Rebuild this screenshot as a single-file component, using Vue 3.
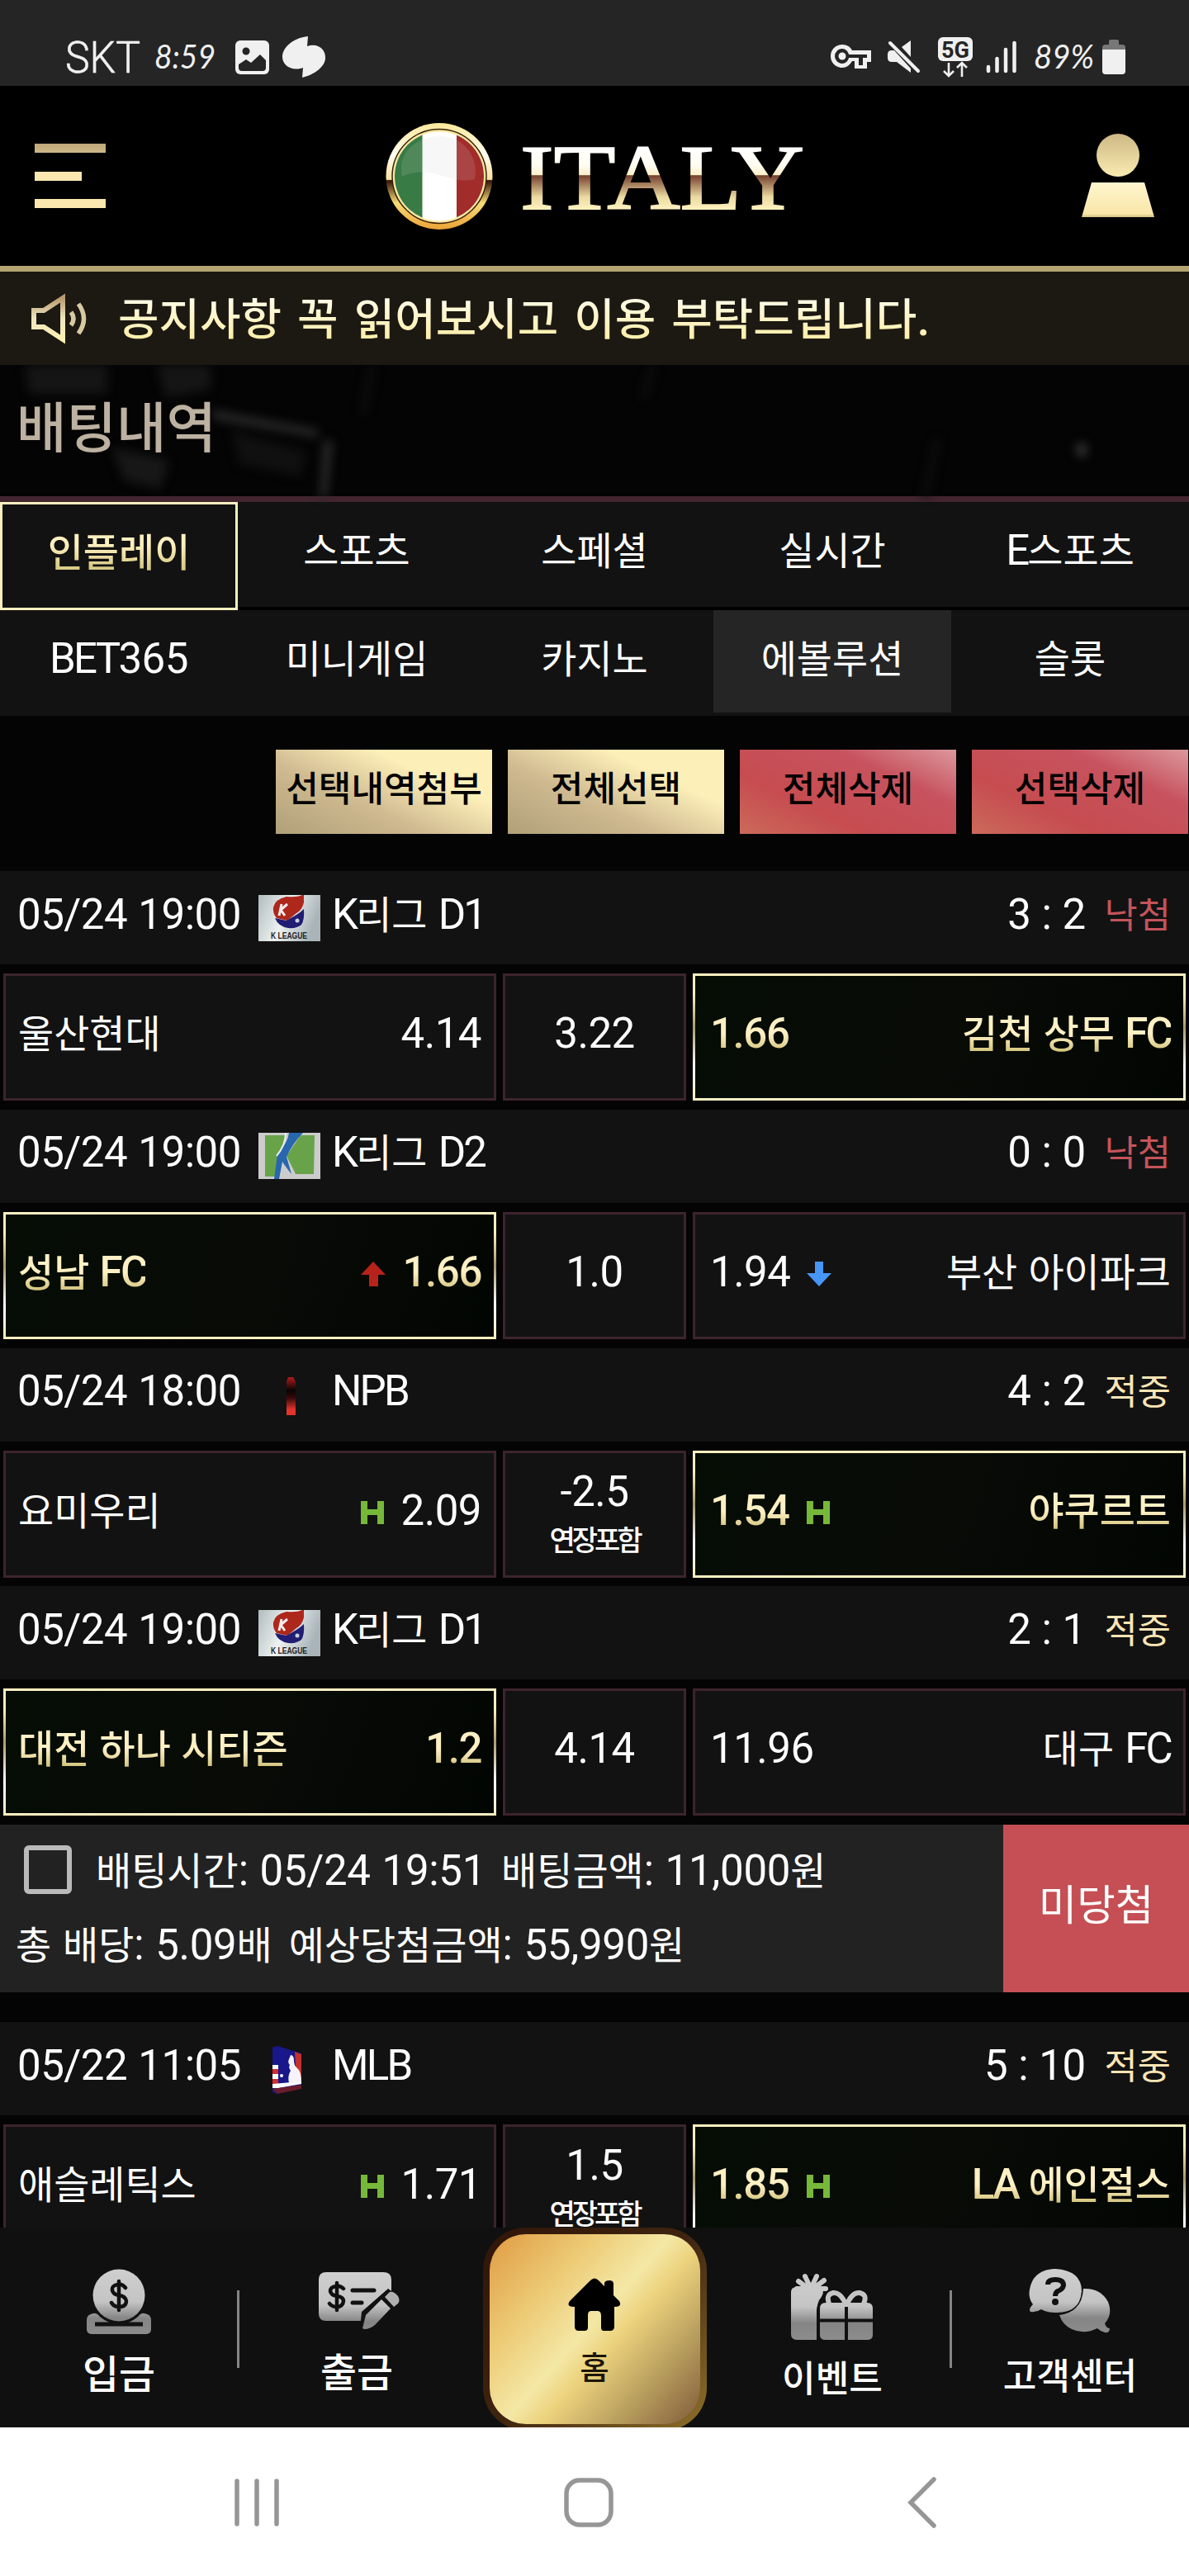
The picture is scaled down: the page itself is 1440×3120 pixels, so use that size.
<template>
  <div class="phone">
    <!-- Status bar -->
    <div class="status-bar">
      <div class="status-left">
        <svg class="carrier" width="94" height="68" viewBox="0 0 94 68">
          <text x="0" y="53" textLength="91" lengthAdjust="spacingAndGlyphs">SKT</text>
        </svg>
        <svg class="clock" width="78" height="60" viewBox="0 0 78 60">
          <text x="0" y="44" textLength="74" lengthAdjust="spacingAndGlyphs">8:59</text>
        </svg>
        <svg class="photo" width="41" height="41" viewBox="0 0 41 41">
          <rect width="41" height="41" rx="6" fill="#f0f0f0" />
          <circle cx="13" cy="13" r="4.5" fill="#252525" />
          <path d="M4 29l9-6 6 4 11-10 7 7v9q0 4-4 4H8q-4 0-4-4z" fill="#252525" />
        </svg>
        <svg class="blob" width="53" height="50" viewBox="0 0 53 50">
          <path d="M31 0L30 12C44 7 53 17 52 27C51 38 37 47 24 50L25 38C11 43 0 35 0 25C0 14 12 2 31 0z" fill="#f0f0f0" />
        </svg>
      </div>
      <div class="status-right">
        <svg class="key" width="49" height="30" viewBox="0 0 49 30">
          <path fill-rule="evenodd" fill="#f0f0f0" d="M14 0C20 0 24 3 26 7H49V21H44V29H29V20H26C23 25 19 28 14 28C6 28 0 22 0 14S6 0 14 0zM14 5A9 9 0 1 0 14 23C18 23 21 20 22 16H34V25H39V16H44V12H22C21 8 18 5 14 5z" />
          <circle cx="14" cy="14" r="4.5" fill="#f0f0f0" />
        </svg>
        <svg class="mute" width="40" height="40" viewBox="0 0 40 40">
          <path d="M28 0V20L17 8zM0 17Q0 12 5 12H8L28 34V39L11 26H5Q0 26 0 21z" fill="#f0f0f0" />
          <path d="M3 3L37 37" stroke="#f0f0f0" stroke-width="4" stroke-linecap="round" />
        </svg>
        <svg class="fiveg" width="42" height="49" viewBox="0 0 42 49">
          <rect width="42" height="29" rx="6" fill="#f0f0f0" />
          <text x="4" y="25" textLength="34" lengthAdjust="spacingAndGlyphs">5G</text>
          <path d="M13 31V46M7 41L13 47L19 41M29 48V32M23 37L29 31L35 37" fill="none" stroke="#f0f0f0" stroke-width="2.6" />
        </svg>
        <svg class="signal" width="38" height="40" viewBox="0 0 38 40">
          <path d="M3 32V37M13.500 22V37M24 11V37M34.500 3V37" stroke="#f0f0f0" stroke-width="4.500" stroke-linecap="round" />
        </svg>
        <svg class="percent" width="78" height="60" viewBox="0 0 78 60">
          <text x="0" y="44" textLength="73" lengthAdjust="spacingAndGlyphs">89%</text>
        </svg>
        <svg class="battery" width="28" height="42" viewBox="0 0 28 42">
          <path d="M8 6V2Q8 0 10 0H18Q20 0 20 2V6H24Q28 6 28 10V14H0V10Q0 6 4 6z" fill="#777" />
          <path d="M0 12H28V38Q28 42 24 42H4Q0 42 0 38z" fill="#f0f0f0" />
        </svg>
      </div>
    </div>

    <!-- Site header -->
    <header class="site-header">
      <div class="hamburger"><i></i><i></i><i></i></div>
      <svg class="logo" width="132" height="132" viewBox="466 146 132 132">
        <defs>
          <linearGradient id="ring" x1="0" y1="0" x2="0" y2="1">
            <stop offset="0" stop-color="#fbe89a" />
            <stop offset=".3" stop-color="#fffdf0" />
            <stop offset=".53" stop-color="#f8e2a0" />
            <stop offset=".54" stop-color="#35130a" />
            <stop offset=".75" stop-color="#f6dc76" />
            <stop offset="1" stop-color="#eca237" />
          </linearGradient>
          <clipPath id="disc"><circle cx="532" cy="212.500" r="54" /></clipPath>
        </defs>
        <circle cx="532" cy="212.500" r="64.500" fill="url(#ring)" />
        <circle cx="532" cy="212.500" r="57" fill="#fbe7a0" stroke="#3a2008" stroke-width="1.500" />
        <g clip-path="url(#disc)">
          <rect x="470" y="150" width="130" height="130" fill="#fff" />
          <rect x="470" y="150" width="41.500" height="130" fill="#387b45" />
          <rect x="553" y="150" width="50" height="130" fill="#a22c2a" />
          <path d="M487 213C480 180 510 163 534 164C563 165 580 190 575 216C545 224 522 196 487 213z" fill="#ccc" opacity=".16" />
        </g>
      </svg>
      <svg class="wordmark" width="344" height="140" viewBox="631 143 344 140">
        <defs>
          <linearGradient id="word" gradientUnits="userSpaceOnUse" x1="0" y1="176" x2="0" y2="254">
            <stop offset="0" stop-color="#fff" />
            <stop offset=".3" stop-color="#fffdf2" />
            <stop offset=".46" stop-color="#fdf0c8" />
            <stop offset=".47" stop-color="#75402e" />
            <stop offset=".8" stop-color="#ead9a0" />
            <stop offset="1" stop-color="#fff3c0" />
          </linearGradient>
        </defs>
        <text x="631" y="252.500" textLength="344" lengthAdjust="spacingAndGlyphs" fill="url(#word)" stroke="url(#word)">ITALY</text>
      </svg>
      <svg class="user" width="90" height="104" viewBox="0 0 90 104">
        <defs>
          <linearGradient id="head" x1="0" y1="0" x2="0" y2="1">
            <stop offset="0" stop-color="#cdb884" /><stop offset="1" stop-color="#faecb2" />
          </linearGradient>
          <linearGradient id="torso" x1="0" y1="0" x2="0" y2="1">
            <stop offset="0" stop-color="#fff6cf" /><stop offset=".9" stop-color="#f9e6a9" /><stop offset="1" stop-color="#d2c084" />
          </linearGradient>
        </defs>
        <circle cx="45" cy="27" r="26" fill="url(#head)" />
        <path d="M13 60H77L89 102H1z" fill="url(#torso)" />
      </svg>
    </header>

    <!-- Notice -->
    <div class="notice">
      <svg width="68" height="58" viewBox="0 0 68 58">
        <defs>
          <linearGradient id="horn" x1="0" y1="0" x2="0" y2="1">
            <stop offset="0" stop-color="#b89a70" /><stop offset=".5" stop-color="#efe6bd" /><stop offset="1" stop-color="#fff0b4" />
          </linearGradient>
        </defs>
        <path d="M3 19H15L38 4V54L15 39H3z" fill="none" stroke="url(#horn)" stroke-width="6" />
        <path d="M48 21Q54 29 48 37M57 11Q70 29 57 47" fill="none" stroke="#d6caa0" stroke-width="5.500" />
      </svg>
      <p><Txt t="공지사항 꼭 읽어보시고 이용 부탁드립니다." /></p>
    </div>

    <main class="page">
      <div class="page-title">
        <svg class="haze" width="1440" height="160" viewBox="0 0 1440 160">
          <g class="haze-shapes">
            <path d="M30 0H130V35H35zM190 0H255V30L200 40z" fill="#151515" />
            <path d="M255 54L385 78V88L260 66z" fill="#282828" />
            <path d="M392 92H403L396 160H387z" fill="#2a2a2a" />
            <path d="M135 100L205 115L195 150L150 140z" fill="#171717" />
            <path d="M280 80L370 105L365 135L290 120z" fill="#101010" />
            <path d="M450 0L440 60M790 0L780 40M1135 90L1120 160" stroke="#0d0d0d" stroke-width="8" />
            <ellipse cx="1310" cy="103" rx="7" ry="9" fill="#333" />
          </g>
        </svg>
        <h1><Txt t="배팅내역" /></h1>
      </div>

      <nav class="tabs">
        <div
          v-for="tab in tabs"
          :key="tab"
          class="tab"
          :class="{ active: tab === '인플레이', hover: tab === '에볼루션' }"
        >
          <span><Txt :t="tab" /></span>
        </div>
      </nav>

      <div class="actions">
        <button v-for="b in actions" :key="b.label" :class="b.kind"><Txt :t="b.label" /></button>
      </div>

      <template v-for="(bet, bi) in bets" :key="bi">
        <section v-for="(m, mi) in bet.matches" :key="mi" class="match">
          <div class="match-head">
            <span class="date">{{ m.date }}</span>
            <span class="league-icon">
              <svg v-if="m.icon === 'k1'" width="75" height="56" viewBox="0 0 75 56">
                <defs>
                  <linearGradient id="silver" x1="0" y1="0" x2="1" y2=".3">
                    <stop offset="0" stop-color="#b2bcbd" /><stop offset=".5" stop-color="#edf1f1" /><stop offset="1" stop-color="#a9b4b9" />
                  </linearGradient>
                </defs>
                <rect width="75" height="56" fill="url(#silver)" />
                <path d="M55 0V9Q53 18 46 22L35 31L22 28Q17 22 18 15Q20 5 34 2Q47 3 53 0z" fill="#ae271b" />
                <path d="M55 17Q56 30 52 36Q46 41 36 40Q24 38 20 28L34 31L46 24Q51 21 55 17z" fill="#211d72" />
                <path d="M28 11L25 25M35 11L27 18L32 25" fill="none" stroke="#f4eded" stroke-width="3" />
                <circle cx="47" cy="31" r="2.500" fill="#c8d0dc" />
                <text class="tiny" x="15" y="53" textLength="44" lengthAdjust="spacingAndGlyphs">K LEAGUE</text>
              </svg>
              <svg v-else-if="m.icon === 'k2'" width="75" height="56" viewBox="0 0 75 56">
                <rect width="75" height="56" fill="#ccc" />
                <path d="M8 3H33L20 53H8zM51 3H68L67 50H45L34 28z" fill="#69a349" />
                <path d="M37 0H54Q42 12 34 29L40 50Q32 40 29 35L25 56H19L23 26Q36 11 37 0z" fill="#2866ae" />
                <path d="M33 0Q33 15 22 28" fill="none" stroke="#e9eef0" stroke-width="2" />
              </svg>
              <svg v-else-if="m.icon === 'npb'" width="75" height="56" viewBox="0 0 75 56">
                <defs>
                  <linearGradient id="stick" x1="0" y1="0" x2="0" y2="1">
                    <stop offset="0" stop-color="#b01c1c" /><stop offset=".35" stop-color="#080304" /><stop offset=".55" stop-color="#3a0808" /><stop offset=".85" stop-color="#e2342b" />
                  </linearGradient>
                </defs>
                <path d="M36 7H42L45 12V53H34V12z" fill="url(#stick)" />
              </svg>
              <svg v-else width="75" height="60" viewBox="0 0 75 60">
                <path d="M17 4L23 2L52 11V53L23 60L17 58z" fill="#18188a" />
                <path d="M17 30H24V36H17zM17 42H24V48H17z" fill="#d6292f" />
                <path d="M17 25H24V30H17zM17 36H24V42H17zM17 48L52 45V48L24 53H17z" fill="#fff" />
                <path d="M44 9L52 12V46H46z" fill="#c3312c" />
                <path d="M39 13Q43 13 43 20Q43 25 46 28Q52 32 52 46L37 47Q35 38 39 32Q36 28 38 25Q35 22 37 18z" fill="#f6f4fa" />
                <path d="M17 54L52 49V54L23 60z" fill="#6b1c2c" />
                <circle cx="28" cy="38" r="2" fill="#fff" />
              </svg>
            </span>
            <span class="league"><Txt :t="m.league" /></span>
            <span class="score">{{ m.score }}</span>
            <span class="result" :class="m.win ? 'win' : 'lose'"><Txt :t="m.win ? '적중' : '낙첨'" /></span>
          </div>
          <div class="cells">
            <div class="cell side" :class="{ picked: m.pick === 'home' }">
              <span class="label team"><Txt :t="m.home" /></span>
              <Mark v-if="m.homeMark" :kind="m.homeMark" />
              <span class="label odds">{{ m.homeOdds }}</span>
            </div>
            <div class="cell middle">
              <span class="label mid-label">{{ m.mid }}</span>
              <span v-if="m.extra" class="extra"><Txt t="연장포함" /></span>
            </div>
            <div class="cell side away" :class="{ picked: m.pick === 'away' }">
              <span class="label odds">{{ m.awayOdds }}</span>
              <Mark v-if="m.awayMark" :kind="m.awayMark" />
              <span class="label team"><Txt :t="m.away" /></span>
            </div>
          </div>
        </section>

        <div v-if="bet.summary" class="summary">
          <div class="summary-info">
            <div class="line first">
              <i class="check"></i>
              <span class="s1"><Txt t="배팅시간: 05/24 19:51" /></span>
              <span><Txt t="배팅금액: 11,000원" /></span>
            </div>
            <div class="line">
              <span class="s2"><Txt t="총 배당: 5.09배" /></span>
              <span><Txt t="예상당첨금액: 55,990원" /></span>
            </div>
          </div>
          <div class="summary-result"><span><Txt t="미당첨" /></span></div>
        </div>
      </template>
    </main>

    <!-- Bottom menu -->
    <div class="bottom-menu">
      <svg class="defs" width="0" height="0">
        <defs>
          <linearGradient id="steel" gradientUnits="userSpaceOnUse" x1="0" y1="0" x2="0" y2="80">
            <stop offset="0" stop-color="#cfcfcf" /><stop offset=".5" stop-color="#c4c4c4" /><stop offset=".75" stop-color="#858585" /><stop offset="1" stop-color="#8c8c8c" />
          </linearGradient>
        </defs>
      </svg>
      <div class="menu-item deposit">
        <svg width="78" height="80" viewBox="0 0 78 80">
          <path d="M8 54Q12 53 16 58Q27 67 39 67T62 58Q66 53 70 54Q78 55 78 62V73Q78 79 71 79H7Q0 79 0 73V62Q0 55 8 54z" fill="url(#steel)" />
          <path d="M10 67H68" stroke="#111" stroke-width="5" />
          <circle cx="39" cy="32" r="34" fill="#111" />
          <circle cx="39" cy="32" r="31.500" fill="url(#steel)" />
          <path d="M47 23Q43 18 38 19Q30 20 31 26Q32 31 39 32Q47 33 48 39Q48 46 39 46Q33 46 30 41M39 15V50" fill="none" stroke="#111" stroke-width="4.500" stroke-linecap="round" />
        </svg>
        <span><Txt t="입금" /></span>
      </div>
      <div class="menu-item withdraw">
        <svg width="98" height="70" viewBox="0 0 98 70">
          <path d="M9 0H78Q88 0 88 9V24L58 52L53 59H9Q0 59 0 50V9Q0 0 9 0z" fill="url(#steel)" />
          <path d="M30 20Q26 16 21 17Q14 18 14 23Q15 28 22 29Q30 30 30 35Q29 42 22 42Q16 42 13 38M22 13V46" fill="none" stroke="#111" stroke-width="4.500" stroke-linecap="round" />
          <path d="M41 22H67M41 37H52" stroke="#111" stroke-width="5" stroke-linecap="round" />
          <path d="M52 48L84 20L101 32L70 68H50z" fill="#111" />
          <path d="M57 52L76 33L87 44L68 64Q62 69 55 69L53 68z" fill="url(#steel)" />
          <path d="M80 30L86 24Q91 23 96 29Q99 34 96 38L91 42z" fill="#b0b0b0" />
        </svg>
        <span><Txt t="출금" /></span>
      </div>
      <div class="menu-item home-item">
        <div class="home-button">
          <svg width="64" height="64" viewBox="0 0 64 64">
            <path d="M26 4Q32-3 38 4L44 10V6Q45 3 50 3Q55 3 55 7V21L62 28Q66 35 56 35V59Q56 64 51 64H43Q40 64 40 60V46Q40 40 36 40H28Q24 40 24 45V60Q24 64 20 64H13Q8 64 8 59V35Q-3 35 2 28z" />
          </svg>
          <span><Txt t="홈" /></span>
        </div>
      </div>
      <div class="menu-item event">
        <svg width="100" height="80" viewBox="0 0 100 80">
          <path d="M7 16H37Q42 22 34 32Q31 39 31 45V80H7Q0 80 0 73V22Q0 16 7 16z" fill="url(#steel)" />
          <path d="M9 9L24 20L40 8M17 3L24 18L31 3M7 18H42" stroke="#c9c9c9" stroke-width="6" stroke-linecap="round" />
          <path d="M42 35H92Q99 35 99 42V74Q99 80 92 80H42Q35 80 35 74V42Q35 35 42 35z" fill="url(#steel)" />
          <path d="M67 38Q60 22 51 23Q42 25 46 36M67 38Q74 22 83 23Q93 25 88 36" fill="none" stroke="#c4c4c4" stroke-width="6" />
          <path d="M67 40V80M35 56.500H99" stroke="#111" stroke-width="4" />
        </svg>
        <span><Txt t="이벤트" /></span>
      </div>
      <div class="menu-item support">
        <svg width="98" height="78" viewBox="0 0 98 78">
          <path d="M65 24Q86 23 95 40Q101 55 91 66Q93 72 97 72Q97 78 91 77Q86 76 82 72Q66 80 51 73Q40 68 36 56Q64 52 65 24z" fill="url(#steel)" />
          <path d="M31 0Q63 2 63 27Q61 54 31 53Q20 53 14 49Q8 53 1 52Q-2 49 4 43Q-2 35 0 25Q4 1 31 0z" fill="url(#steel)" />
          <path d="M22 19Q22 13 31 13Q41 13 41 20Q40 25 34 27Q31 29 31 33" fill="none" stroke="#111" stroke-width="6" />
          <circle cx="31" cy="40" r="4" fill="#111" />
        </svg>
        <span><Txt t="고객센터" /></span>
      </div>
    </div>

    <!-- System navigation -->
    <div class="system-nav">
      <svg width="54" height="60" viewBox="0 0 54 60">
        <path d="M3 4V56M27 4V56M51 4V56" />
      </svg>
      <svg class="nav-home" width="60" height="60" viewBox="0 0 60 60">
        <rect x="3" y="3" width="54" height="54" rx="16" />
      </svg>
      <svg width="36" height="64" viewBox="0 0 36 64">
        <path d="M32 4L4 32L32 60" />
      </svg>
    </div>
  </div>
</template>

<script setup>
import { h } from 'vue'

// Hangul and capital runs get their own size and tracking so they sit well beside digits
const Txt = (props) =>
  props.t
    .split(/([가-힣]+|[A-Z]+)/)
    .filter(Boolean)
    .map((s) => {
      if (/[가-힣]/.test(s)) return h('span', { class: 'ko' }, s)
      if (/[A-Z]/.test(s)) return h('span', { class: 'cap' }, s)
      return s
    })
Txt.props = ['t']

const marks = {
  up: ['#b7231a', 'M15 0L30 16H21V30H10V16H0z'],
  down: ['#4796f7', 'M10 0H20V14H30L15 30L0 14H10z'],
  h: ['#76b83a', 'M1 1H9V11H21V1H29V29H21V18H9V29H1z'],
}
const Mark = (props) =>
  h('svg', { class: 'mark', width: 30, height: 30, viewBox: '0 0 30 30' }, [
    h('path', { fill: marks[props.kind][0], d: marks[props.kind][1] }),
  ])
Mark.props = ['kind']

const tabs = ['인플레이', '스포츠', '스페셜', '실시간', 'E스포츠', 'BET365', '미니게임', '카지노', '에볼루션', '슬롯']

const actions = [
  { label: '선택내역첨부', kind: 'gold' },
  { label: '전체선택', kind: 'gold' },
  { label: '전체삭제', kind: 'red' },
  { label: '선택삭제', kind: 'red' },
]

const bets = [
  {
    summary: true,
    matches: [
      { date: '05/24 19:00', icon: 'k1', league: 'K리그 D1', score: '3 : 2', win: false, home: '울산현대', homeOdds: '4.14', mid: '3.22', awayOdds: '1.66', away: '김천 상무 FC', pick: 'away' },
      { date: '05/24 19:00', icon: 'k2', league: 'K리그 D2', score: '0 : 0', win: false, home: '성남 FC', homeMark: 'up', homeOdds: '1.66', mid: '1.0', awayOdds: '1.94', awayMark: 'down', away: '부산 아이파크', pick: 'home' },
      { date: '05/24 18:00', icon: 'npb', league: 'NPB', score: '4 : 2', win: true, home: '요미우리', homeMark: 'h', homeOdds: '2.09', mid: '-2.5', extra: true, awayOdds: '1.54', awayMark: 'h', away: '야쿠르트', pick: 'away' },
      { date: '05/24 19:00', icon: 'k1', league: 'K리그 D1', score: '2 : 1', win: true, home: '대전 하나 시티즌', homeOdds: '1.2', mid: '4.14', awayOdds: '11.96', away: '대구 FC', pick: 'home' },
    ],
  },
  {
    matches: [
      { date: '05/22 11:05', icon: 'mlb', league: 'MLB', score: '5 : 10', win: true, home: '애슬레틱스', homeMark: 'h', homeOdds: '1.71', mid: '1.5', extra: true, awayOdds: '1.85', awayMark: 'h', away: 'LA 에인절스', pick: 'away' },
    ],
  },
]
</script>

<style>
body {
  margin: 0;
  background: #040404;
}

.ko {
  font-family: "Noto Sans CJK KR", sans-serif;
  font-size: 0.92em;
  line-height: 0;
  letter-spacing: 0;
}
.cap {
  letter-spacing: -0.055em;
}

.mark {
  flex-shrink: 0;
  margin-top: -4px;
}
</style>

<style scoped>
.phone {
  width: 1440px;
  height: 3120px;
  overflow: hidden;
  display: flex;
  flex-direction: column;
  background: #040404;
  color: #fff;
  font-family: Roboto, "Noto Sans CJK KR", sans-serif;
  font-size: 51px;
  font-weight: 400;
  line-height: 60px;
  letter-spacing: -0.5px;
  word-spacing: 1px;
}
.phone * {
  box-sizing: border-box;
}
svg {
  display: block;
  flex-shrink: 0;
  overflow: visible;
  letter-spacing: 0;
  word-spacing: 0;
}
span {
  white-space: nowrap;
}

/* Status bar */
.status-bar {
  height: 104px;
  flex-shrink: 0;
  background: #252525;
  padding: 35px 77px 0 79px;
  display: flex;
  justify-content: space-between;
}
.status-left,
.status-right {
  height: 68px;
  display: flex;
  align-items: center;
}
.carrier text {
  font: 300 54px Roboto, sans-serif;
  fill: #f0f0f0;
  stroke: #f0f0f0;
  stroke-width: 0.6px;
}
.clock text,
.percent text {
  font: italic 400 41px Lato, sans-serif;
  fill: #f0f0f0;
}
.fiveg text {
  font: 700 28px Roboto, sans-serif;
  fill: #252525;
}
.clock { margin-left: 14px; }
.photo { margin-left: 20px; }
.blob { margin-left: 16px; }
.mute { margin-left: 20px; }
.fiveg { margin-left: 21px; }
.signal { margin-left: 16px; }
.percent { margin-left: 20px; }
.battery { margin-left: 5px; }

/* Header */
.site-header {
  height: 225px;
  flex-shrink: 0;
  background: #000;
  border-bottom: 7px solid #b3a471;
  padding: 0 41px 0 42px;
  display: flex;
  align-items: center;
}
.hamburger {
  width: 86px;
  height: 78px;
  display: flex;
  flex-direction: column;
  justify-content: space-between;
}
.hamburger i {
  height: 11px;
  background: #fae8b0;
}
.hamburger i:nth-child(1) {
  background: linear-gradient(#c0a779, #ccb789);
}
.hamburger i:nth-child(2) {
  width: 57px;
}
.logo {
  margin-left: 338px;
}
.wordmark {
  margin-left: 32px;
}
.wordmark text {
  font: 112px "Liberation Serif", serif;
  stroke-width: 2px;
}
.user {
  margin-left: auto;
}

/* Notice */
.notice {
  height: 113px;
  flex-shrink: 0;
  background: #1c1812;
  padding-left: 38px;
  display: flex;
  align-items: center;
}
.notice p {
  margin: 0 0 0 37px;
  font-size: 58.5px;
  font-weight: 500;
  word-spacing: 5px;
  background: linear-gradient(#fffbe6 10%, #fdeea9 90%);
  -webkit-background-clip: text;
  background-clip: text;
  color: transparent;
}

.page {
  flex: 1;
  min-height: 0;
  overflow: hidden;
}

/* Title */
.page-title {
  height: 166px;
  position: relative;
  border-bottom: 7px solid #43252f;
  padding: 44px 0 0 20px;
}
.haze {
  position: absolute;
  left: 0;
  top: 0;
}
.haze-shapes {
  filter: blur(6px);
}
.page-title h1 {
  position: relative;
  margin: 0;
  font-size: 71.5px;
  font-weight: 500;
  line-height: 64px;
  color: #bdb2a2;
}

/* Tabs */
.tabs {
  display: grid;
  grid-template-columns: repeat(5, 288px);
  grid-template-rows: 127px 128px;
  row-gap: 4px;
  background: #000;
}
.tab {
  background: #121212;
  text-align: center;
  padding-top: 29px;
}
.tab.hover {
  background: linear-gradient(#252525 124px, #121212 124px);
}
.tab.active {
  height: 131px;
  border: 3px solid #fdf0bf;
  padding-top: 28px;
}
.tab.active span {
  font-weight: 500;
  background: linear-gradient(#fff0bf 35%, #d9cc88 80%);
  -webkit-background-clip: text;
  background-clip: text;
  color: transparent;
}

/* Action buttons */
.actions {
  height: 188px;
  padding: 41px 0 0 334px;
  display: flex;
  gap: 19px;
}
.actions button {
  width: 262px;
  height: 102px;
  flex-shrink: 0;
  border: 0;
  padding: 0 0 9px;
  font: 500 46.800px/60px Roboto, sans-serif;
  color: #000;
  white-space: nowrap;
}
.gold {
  background: linear-gradient(25deg, #b0a078, #cfba91 38%, #fdefb8 70%);
}
.red {
  background: linear-gradient(25deg, #cb6a5a, #c64c50 32%, #c7535f 70%, #dc989c);
}

/* Match */
.match {
  padding-bottom: 10.75px;
}
.match-head {
  height: 113px;
  background: #121212;
  padding: 0 22px 0 21px;
  display: flex;
  align-items: center;
}
.match-head > span:not(.league-icon) {
  margin-top: -8px;
}
.date {
  width: 292px;
}
.league-icon {
  width: 75px;
}
.league {
  margin-left: 14px;
}
.tiny {
  font: 700 10px "Liberation Sans", sans-serif;
  fill: #222;
}
.score {
  margin-left: auto;
  word-spacing: 1px;
}
.result {
  margin-left: 23px;
  font-size: 47.500px;
}
.win { color: #fbe5b4; }
.lose { color: #c4545a; }

.cells {
  margin-top: 11px;
  padding: 0 4px;
  display: flex;
  gap: 8px;
}
.cell {
  height: 154px;
  background: #121212;
  border: 3px solid #3c242d;
  display: flex;
  align-items: center;
}
.side {
  width: 597px;
  padding: 0 15px;
}
.side.away {
  padding-left: 18px;
}
.middle {
  width: 222px;
  flex-direction: column;
  justify-content: center;
}
.label {
  margin-top: -8px;
}
.team {
  margin-right: auto;
}
.odds {
  margin-left: 20px;
}
.away .odds {
  margin: -8px 20px 0 0;
}
.away .team {
  margin: -8px 0 0 auto;
}
.mid-label:not(:last-child) {
  margin-top: 5px;
}
.extra {
  margin-top: -1px;
  font-size: 37px;
  font-weight: 500;
}
.extra :deep(.ko) {
  letter-spacing: -4px;
}
.picked {
  background: linear-gradient(110deg, #050d05, #080b06 50%, #020602);
  border-image: linear-gradient(#fdefbf 15%, #ab9c72 42%, #fff 75%, #fdefbf) 1;
}
.picked .label {
  font-weight: 500;
  letter-spacing: -1.4px;
  background: linear-gradient(#fff0c4 50%, #d3c580 85%);
  -webkit-background-clip: text;
  background-clip: text;
  color: transparent;
}

/* Summary */
.summary {
  height: 203px;
  margin-bottom: 36px;
  display: flex;
  background: #222;
}
.summary-info {
  flex: 1;
  padding: 24px 0 0 19px;
  letter-spacing: -0.3px;
  word-spacing: 1.5px;
}
.line {
  height: 60px;
  display: flex;
  align-items: center;
}
.line.first {
  margin-bottom: 32px;
}
.first span {
  margin-top: 4px;
}
.check {
  width: 58px;
  height: 59px;
  margin: 0 29px 0 10px;
  border: 6px solid #bababa;
  border-radius: 6px;
}
.s1 { margin-right: 19px; }
.s2 { margin-right: 20px; }
.summary-result {
  width: 225px;
  padding-bottom: 10px;
  display: flex;
  align-items: center;
  justify-content: center;
  background: #c54f54;
  font-size: 55px;
  font-weight: 400;
}

/* Bottom menu */
.bottom-menu {
  height: 242px;
  flex-shrink: 0;
  overflow: hidden;
  background: #101010;
  display: grid;
  grid-template-columns: repeat(5, 288px);
  position: relative;
}
.defs {
  position: absolute;
}
.menu-item {
  display: flex;
  flex-direction: column;
  align-items: center;
  position: relative;
  padding-top: 50px;
  font-size: 52px;
  font-weight: 500;
}
.menu-item > span {
  margin-top: 18px;
}
.withdraw {
  padding-top: 54px;
}
.withdraw svg {
  margin-left: 6px;
}
.withdraw > span {
  margin-top: 22px;
}
.event,
.support {
  font-size: 48px;
}
.support > span {
  margin-top: 22px;
}
.event {
  padding-top: 56px;
}
.event > span {
  margin-top: 17px;
}
.deposit::after,
.support::before {
  content: "";
  position: absolute;
  top: 76px;
  width: 3px;
  height: 94px;
  background: #858585;
}
.deposit::after { right: -2px; }
.support::before { left: -2px; }
.home-item {
  padding: 0;
}
.home-button {
  width: 271px;
  height: 246px;
  border: 8px solid transparent;
  border-radius: 52px;
  background:
    linear-gradient(132deg, #df9b42, #edcb76 28%, #f4e8a6 48%, #ecd27d 58%, #b79d5d 78%, #805a3b) padding-box,
    linear-gradient(135deg, #301509, #3f2410 50%, #8f7129) border-box;
  display: flex;
  flex-direction: column;
  align-items: center;
  padding-top: 53px;
  color: #1c1608;
  font-size: 42px;
  line-height: 50px;
}
.home-button span {
  margin-top: 20px;
}

/* System nav */
.system-nav {
  height: 180px;
  flex-shrink: 0;
  background: #fff;
  padding: 2px 305px 0 284px;
  display: flex;
  align-items: center;
  justify-content: space-between;
}
.system-nav svg {
  fill: none;
  stroke: #969696;
  stroke-width: 5.500;
  stroke-linecap: round;
}
.system-nav .nav-home {
  margin-right: 12px;
}
</style>
